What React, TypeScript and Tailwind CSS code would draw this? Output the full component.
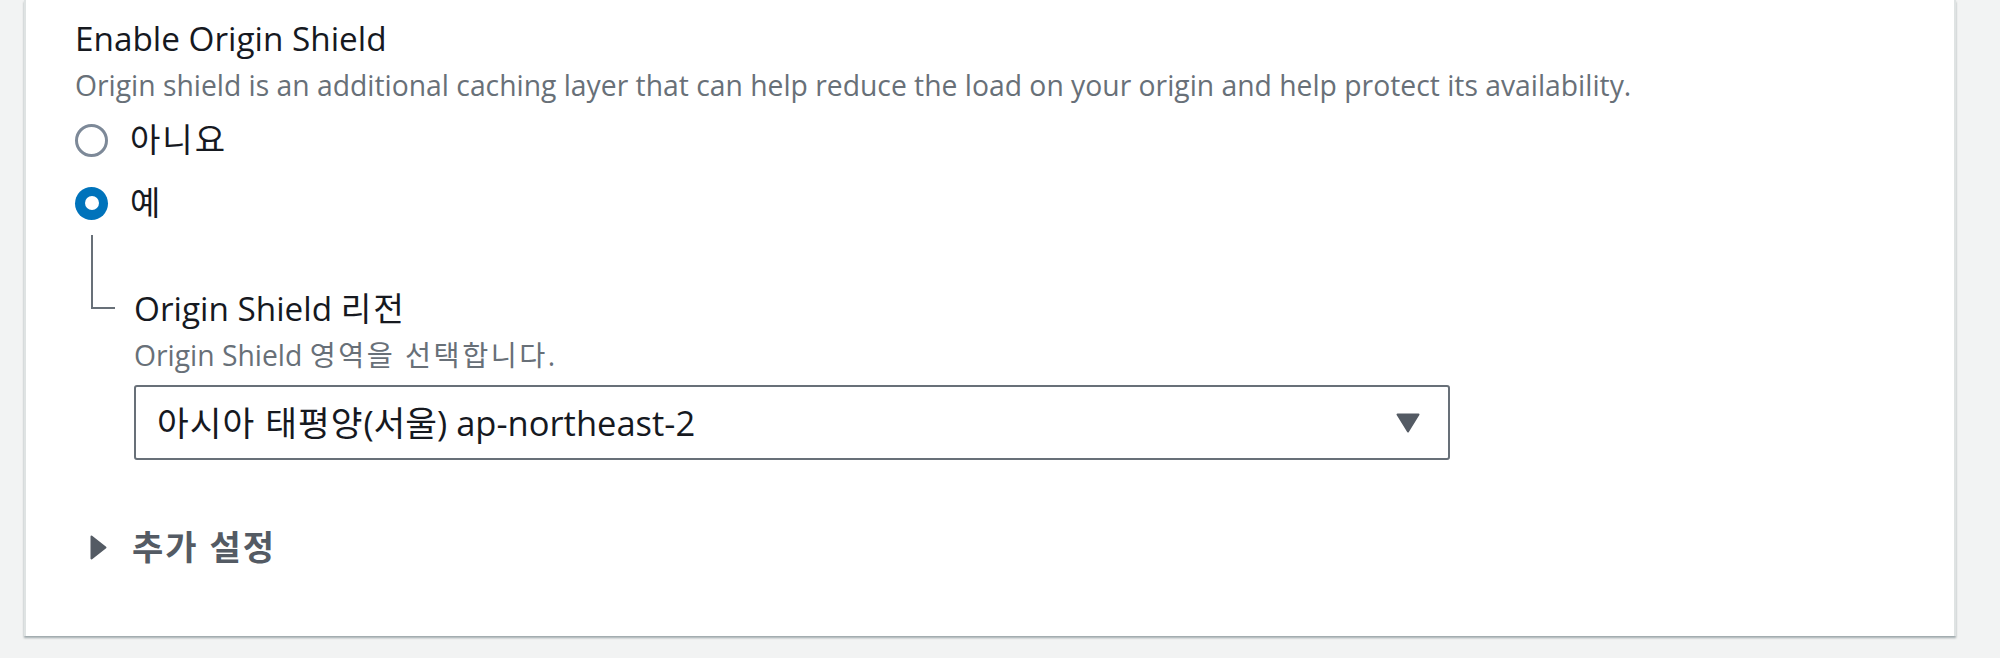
import React from 'react';

const font = { fontFamily: '"Open Sans", "Noto Sans CJK KR", sans-serif' };

function Radio({ checked, label }: { checked: boolean; label: string }) {
  return (
    <div className="flex items-center h-[50px]">
      {checked ? (
        <span className="flex items-center justify-center w-[33px] h-[33px] rounded-full bg-[#0073bb]">
          <span className="w-[14px] h-[14px] rounded-full bg-white" />
        </span>
      ) : (
        <span className="w-[33px] h-[33px] rounded-full border-[3px] border-[#7d8998] bg-white" />
      )}
      <span className="ml-[22px] text-[33px] leading-[44px] tracking-[2px] text-[#16191f]">{label}</span>
    </div>
  );
}

export default function App() {
  return (
    <div className="w-[2000px] h-[658px] bg-[#f2f3f3] overflow-hidden" style={font}>
      <div className="ml-[24px] w-[1932px] h-[636px] bg-white border-l-[2px] border-r-[2px] border-[#dfe3e3] shadow-[0_2px_2px_0_rgba(0,28,36,0.35)] pl-[49px] pt-[16px]">
        <div className="text-[33.3px] leading-[44px] text-[#16191f]">Enable Origin Shield</div>
        <div className="mt-[7px] text-[28.3px] leading-[36px] text-[#687078]">
          Origin shield is an additional caching layer that can help reduce the load on your origin and help protect its availability.
        </div>
        <div className="mt-[12px] flex flex-col gap-[13px]">
          <Radio checked={false} label="아니요" />
          <Radio checked={true} label="예" />
        </div>
        <div className="flex mt-[7px]">
          <div className="w-[59px] shrink-0">
            <div className="ml-[16px] w-[24px] h-[74px] border-l-[2px] border-b-[2px] border-[#687078]" />
          </div>
          <div className="pt-[51px]">
            <div className="text-[33.3px] leading-[44px] text-[#16191f]">
              Origin Shield <span className="tracking-[2px]">리전</span>
            </div>
            <div className="mt-[7px] text-[28.3px] leading-[36px] text-[#687078]">
              Origin Shield <span className="tracking-[2.5px]">영역을 선택합니다.</span>
            </div>
            <div className="mt-[12px] w-[1316px] h-[75px] border-[2px] border-[#687078] rounded-[3px] flex items-center pl-[21px] pr-[28px]">
              <span className="flex-1 text-[34.5px] leading-[44px] text-[#16191f]">
                <span className="tracking-[1px]">아시아 태평양</span>(서울) ap-northeast-2
              </span>
              <svg width="24" height="20" viewBox="0 0 24 20">
                <path d="M1.5 1.5 L22.5 1.5 L12 18.5 Z" fill="#545b64" stroke="#545b64" strokeWidth="2" strokeLinejoin="round" />
              </svg>
            </div>
          </div>
        </div>
        <div className="mt-[65px] flex items-center h-[44px]">
          <svg width="17" height="25" viewBox="0 0 17 25" className="ml-[15px]">
            <path d="M1.5 1.5 L15.5 12.5 L1.5 23.5 Z" fill="#545b64" stroke="#545b64" strokeWidth="2" strokeLinejoin="round" />
          </svg>
          <span className="ml-[25px] text-[34px] leading-[44px] font-semibold tracking-[2px] text-[#545b64]">추가 설정</span>
        </div>
      </div>
    </div>
  );
}
